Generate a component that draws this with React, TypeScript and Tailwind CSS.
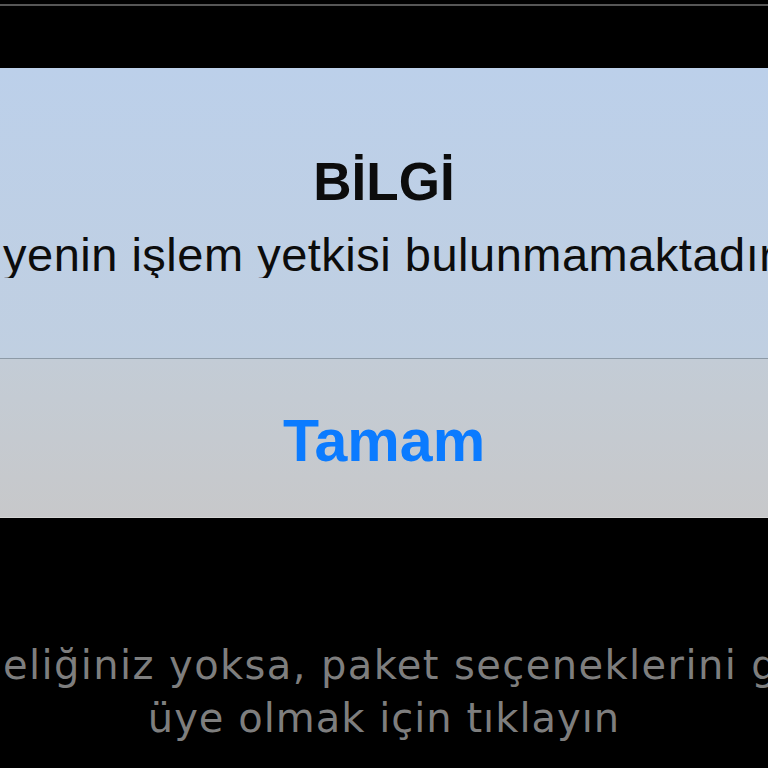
import React from "react";

// iOS style alert, zoomed in and cropped at the sides
const App = () => {
  return (
    <div className="flex h-[768px] w-[768px] flex-col overflow-hidden bg-black">
      {/* status edge line */}
      <div className="mt-[4px] h-[2px] w-full bg-[#565656]" />

      <div className="mt-[62px] flex h-[450px] w-full flex-col">
        {/* title + message */}
        <div className="flex h-[290px] flex-col bg-linear-to-b from-[#bcd0ea] to-[#c0cfe1] pt-[88px] font-['Liberation_Sans',Arial,sans-serif] text-[#0c0c0c]">
          <h1 className="text-center text-[53px] leading-[52px] font-bold">
            BİLGİ
          </h1>
          <p className="mt-[24px] overflow-hidden pl-[3px] text-[47px] leading-[46px] tracking-[0.5px] whitespace-nowrap">
            yenin işlem yetkisi bulunmamaktadır.
          </p>
        </div>
        <div className="h-px w-full bg-[#8d9aa7]" />
        {/* button */}
        <button className="flex flex-1 items-center justify-center bg-linear-to-b from-[#c3ccd6] to-[#c7c8ca] pt-[6px] font-['Liberation_Sans',Arial,sans-serif] text-[59px] leading-[59px] font-bold text-[#0b7bff]">
          Tamam
        </button>
        <div className="h-px w-full bg-[#d6d6d6]" />
      </div>

      {/* footer hint */}
      <div className="mt-[121px] flex flex-col font-['DejaVu_Sans',sans-serif] text-[40px] leading-[53px] text-[#7e7e7e]">
        <p className="overflow-hidden pl-[3px] tracking-[1.4px] whitespace-nowrap">
          eliğiniz yoksa, paket seçeneklerini görmek ve
        </p>
        <p className="text-center tracking-[1px] whitespace-nowrap">
          üye olmak için tıklayın
        </p>
      </div>
    </div>
  );
};

export default App;
